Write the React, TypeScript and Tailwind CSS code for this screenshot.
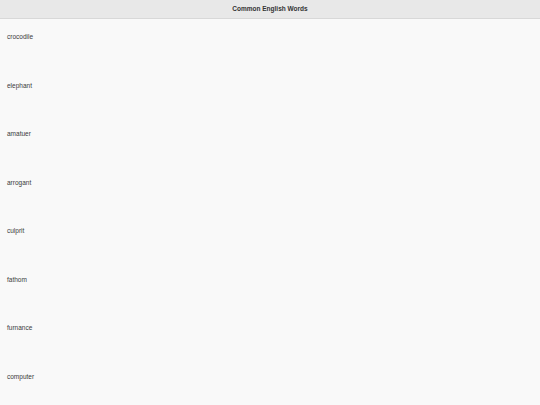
const words = ["crocodile", "elephant", "amatuer", "arrogant", "culprit", "fathom", "furnance", "computer"];

export default function App() {
  return (
    <div className="h-[405px] w-[540px] overflow-hidden bg-[#f9f9f9] font-['Liberation_Sans',Arial,sans-serif] text-[#3a3a3a]">
      <div className="flex h-[19px] items-center justify-center border-b border-[#d8d8d8] bg-[#e8e8e8]">
        <h1 className="text-[6.5px] font-bold leading-none text-[#333]">Common English Words</h1>
      </div>
      <ul>
        {words.map((w) => (
          <li key={w} className="h-[48.5px] px-[7px] pt-[14px] text-[6.5px] leading-[8px]">
            {w}
          </li>
        ))}
      </ul>
    </div>
  );
}
